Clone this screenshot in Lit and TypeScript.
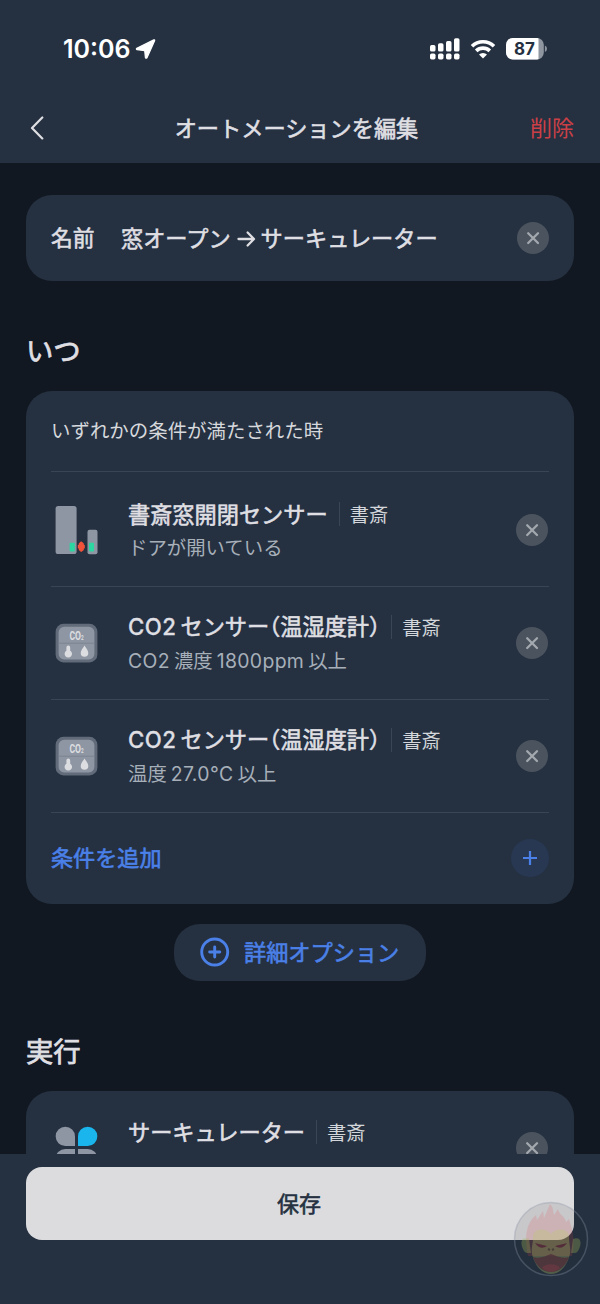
import { LitElement, html, svg, css, nothing, TemplateResult } from "lit";
import { customElement, property } from "lit/decorators.js";

interface Condition {
  icon: "door" | "co2" | "fan";
  title: TemplateResult;
  room: string;
  detail?: TemplateResult;
}

const shared = css`
  * {
    box-sizing: border-box;
  }
  .latin {
    font-family: Inter, "Noto Sans CJK JP", sans-serif;
  }
  .before {
    margin-left: 4px;
  }
  .after {
    margin-right: 4px;
  }
  .half {
    font-feature-settings: "halt";
  }
  .strong {
    font-weight: 400;
    -webkit-text-stroke: 0.6px currentColor;
  }
  .strong .latin {
    font-weight: 500;
    -webkit-text-stroke-width: 0.3px;
  }
`;

const doorIcon = svg`<svg width="44" height="50" viewBox="0 0 44 50">
  <rect x=".6" y=".9" width="21" height="48.2" rx="2.6" fill="#8e96a3"/>
  <rect x="32.5" y="24.8" width="10" height="24.4" rx="2" fill="#8e96a3"/>
  <rect x="14.6" y="37.8" width="5.2" height="8.6" rx=".8" fill="#2bd6a0"/>
  <rect x="34" y="37.8" width="5" height="8.6" rx=".8" fill="#2bd6a0"/>
  <path d="M26.200 37l2 1.600v1.700h1v2.700h-1v1.700l-2 1.600-1.800-1.600V43h-1v-2.700h1v-1.700z" fill="#f1523a" stroke="#f1523a" stroke-width="1.200" stroke-linejoin="round"/>
</svg>`;

const co2Icon = svg`<svg width="44" height="40" viewBox="0 0 44 40">
  <rect x=".6" y=".8" width="41.800" height="38.600" rx="8" fill="#616b79"/>
  <rect x="3.600" y="3.800" width="35.800" height="32.600" rx="5.500" fill="#8e96a3"/>
  <path d="M3.600 20.200h35.800" stroke="#7b8492" stroke-width="1"/>
  <text transform="translate(14.400 16.600) scale(.72 1)" font-family="Roboto, sans-serif" font-weight="700" font-size="12" fill="#dcdde0">CO<tspan font-size="6.500">2</tspan></text>
  <path d="M11.400 24.400a1.900 1.900 0 0 1 3.800 0v3.300a3.700 3.700 0 1 1-3.800 0z" fill="#dcdde0"/>
  <path d="M29.500 22.400c1.600 2.600 3.800 5 3.800 7.500a3.800 3.800 0 0 1-7.600 0c0-2.500 2.200-4.900 3.800-7.500z" fill="#dcdde0"/>
</svg>`;

const fanIcon = svg`<svg width="44" height="44" viewBox="0 0 44 44">
  <path d="M10.300 .7a9.700 9.700 0 0 1 9.700 9.700V20h-9.700a9.650 9.650 0 0 1 0-19.300z" fill="#8e96a3"/>
  <path d="M32.700 .7a9.650 9.650 0 0 1 0 19.300H23v-9.600a9.700 9.700 0 0 1 9.700-9.700z" fill="#19b5ec"/>
  <path d="M10.300 23H20v9.700a9.700 9.700 0 1 1-9.700-9.700z" fill="#8e96a3"/>
  <path d="M23 23h9.700a9.700 9.700 0 1 1-9.700 9.700z" fill="#8e96a3"/>
</svg>`;

@customElement("remove-button")
class RemoveButton extends LitElement {
  static styles = css`
    :host {
      display: block;
      flex: none;
      width: 32px;
      height: 32px;
    }
    svg {
      display: block;
    }
  `;
  render() {
    return html`<svg width="32" height="32" viewBox="0 0 32 32">
      <circle cx="16" cy="16" r="16" fill="#4a535e" />
      <path d="M11.200 11.200l9.800 9.800M21 11.200l-9.800 9.800" stroke="#a3a8ae" stroke-width="2.300" stroke-linecap="round" />
    </svg>`;
  }
}

@customElement("status-bar")
class StatusBar extends LitElement {
  static styles = [
    shared,
    css`
      :host {
        display: flex;
        align-items: center;
        height: 98px;
        padding: 0 53px 0 63px;
        color: #fff;
        font-family: Inter, sans-serif;
      }
      .time {
        font-size: 25px;
        font-weight: 600;
        letter-spacing: 0;
        width: 72px;
        white-space: nowrap;
      }
      .space {
        flex: 1;
      }
      svg {
        display: block;
      }
      .signal {
        margin-right: 10px;
      }
      .wifi {
        margin-right: 10px;
      }
      .battery text {
        font-size: 17px;
        font-weight: 700;
      }
    `,
  ];
  render() {
    const bars = [6.6, 8.400, 10.600, 13.400];
    return html`
      <span class="time">10:06</span>
      <svg width="22" height="22" viewBox="0 0 22 22">
        <path d="M1.800 10.200L18.800 1.900q1.200-.3.800.9L12 19.800q-1.300 1-1.600-.3L9.700 12.600 2 11.700q-1.200-.6-.2-1.500z" fill="#fff" stroke="#fff" stroke-width="1.200" stroke-linejoin="round" />
      </svg>
      <span class="space"></span>
      <svg class="signal" width="30" height="22" viewBox="0 0 30 22">
        ${bars.map(
          (h, i) => svg`
            <rect x=${i * 8} y=${13.600 - h} width="5.500" height=${h} rx="1.700" fill="#fff"/>
            <rect x=${i * 8} y="15.600" width="5.500" height="5.800" rx="1.700" fill="#fff"/>`
        )}
      </svg>
      <svg class="wifi" width="26" height="20" viewBox="0 0 26 20">
        <path d="M2 7.200a15.800 15.800 0 0 1 22 0M6.200 11.900a9.700 9.700 0 0 1 13.600 0" fill="none" stroke="#fff" stroke-width="3.600" />
        <path d="M13 19.500l-4-4a5.800 5.800 0 0 1 8 0z" fill="#fff" />
      </svg>
      <svg class="battery" width="41" height="22" viewBox="0 0 41 22">
        <defs>
          <clipPath id="body"><rect width="37.800" height="21.400" rx="6.800" /></clipPath>
        </defs>
        <g clip-path="url(#body)">
          <rect width="38" height="22" fill="#8f969f" />
          <rect width="32.500" height="22" fill="#fff" />
        </g>
        <path d="M38.900 7.400q2.100 1 2.100 3.300t-2.100 3.300z" fill="#8f969f" />
        <text x="18.500" y="16.800" text-anchor="middle" fill="#253141">87</text>
      </svg>
    `;
  }
}

@customElement("condition-row")
class ConditionRow extends LitElement {
  @property({ attribute: false }) item!: Condition;

  static styles = [
    shared,
    css`
      :host {
        display: flex;
        align-items: center;
        height: 113px;
        padding-right: 1px;
      }
      .icon {
        width: 77px;
        padding-left: 4px;
        flex: none;
        margin-bottom: 2px;
      }
      remove-button {
        margin-bottom: 2px;
      }
      .icon svg {
        display: block;
      }
      .copy {
        flex: 1;
        white-space: nowrap;
      }
      .head {
        display: flex;
        align-items: center;
        height: 34px;
      }
      .title {
        font-size: 22.200px;
        line-height: 32px;
        padding-bottom: 2px;
        color: #dfdfe3;
      }
      .title .latin {
        letter-spacing: 0.5px;
      }
      .room {
        font-size: 19.300px;
        line-height: 34px;
        color: #d3d6da;
        margin-left: 11px;
        display: flex;
        align-items: center;
        gap: 10px;
      }
      .room::before {
        content: "";
        width: 1px;
        height: 24px;
        background: #3a4655;
      }
      .detail {
        font-size: 19.400px;
        line-height: 31px;
        height: 33px;
        color: #a7afb9;
      }
      .detail .latin {
        letter-spacing: 0.35px;
      }
    `,
  ];
  render() {
    const { icon, title, room, detail } = this.item;
    return html`
      <div class="icon">${icon === "door" ? doorIcon : icon === "co2" ? co2Icon : fanIcon}</div>
      <div class="copy">
        <div class="head">
          <span class="title strong">${title}</span>
          <span class="room">${room}</span>
        </div>
        <div class="detail">${detail ?? nothing}</div>
      </div>
      <remove-button></remove-button>
    `;
  }
}

@customElement("app-root")
class AppRoot extends LitElement {
  static styles = [
    shared,
    css`
      :host {
        display: flex;
        flex-direction: column;
        position: relative;
        width: 600px;
        height: 1304px;
        overflow: hidden;
        background: #121822;
        color: #dfdfe3;
        font-family: "Noto Sans CJK JP", sans-serif;
        text-autospace: no-autospace;
      }
      svg {
        display: block;
      }
      .top {
        flex: none;
        height: 163px;
        background: #253141;
      }
      .nav {
        display: grid;
        grid-template-columns: 100px 1fr 100px;
        align-items: center;
        height: 60px;
        padding: 0 26px 0 29px;
      }
      .nav-title {
        font-size: 22.200px;
        text-align: center;
        margin-right: 10px;
        padding-bottom: 3px;
        white-space: nowrap;
      }
      .delete {
        font-size: 22px;
        color: #cb4047;
        text-align: right;
        padding-bottom: 4px;
      }
      .content {
        flex: 1;
        min-height: 0;
        overflow: hidden;
        padding: 32px 26px 0;
      }
      .card {
        background: #253141;
        border-radius: 26px;
        padding: 0 25px;
      }
      .name {
        display: flex;
        align-items: center;
        height: 86px;
        font-size: 22.200px;
        white-space: nowrap;
      }
      .name-label {
        width: 70px;
        font-size: 21.800px;
        padding-bottom: 3px;
      }
      .name-value {
        flex: 1;
        padding-bottom: 3px;
      }
      .arrow {
        display: inline-block;
        margin: 0 5px 0 6px;
        vertical-align: -1px;
      }
      .section {
        margin: 0;
        font-size: 27.300px;
        line-height: 40px;
      }
      .section.strong {
        -webkit-text-stroke-width: 0.8px;
      }
      .when {
        margin: 48px 0 22px;
      }
      .run {
        margin: 49px 0 21px;
      }
      .rule {
        height: 80px;
        font-size: 19.450px;
        line-height: 78px;
        color: #d6d8dc;
      }
      .line {
        height: 1px;
        background: #394554;
      }
      .first {
        padding-top: 2px;
      }
      .row {
        height: 112px;
        display: grid;
        align-items: center;
      }
      .last {
        padding-top: 1px;
      }
      .add {
        display: flex;
        align-items: center;
        justify-content: space-between;
        height: 91px;
        padding-bottom: 2px;
        color: #4a80e8;
        font-size: 22.100px;
      }
      .add span {
        padding-bottom: 3px;
      }
      .options {
        display: flex;
        align-items: center;
        width: 252px;
        height: 57px;
        margin: 20px auto 0;
        padding-left: 26px;
        gap: 14px;
        border-radius: 26px;
        background: #253141;
        color: #4a80e8;
        font-size: 22.200px;
        white-space: nowrap;
      }
      .options svg {
        margin-bottom: 1px;
      }
      .options span {
        padding-bottom: 3px;
      }
      .bottom {
        flex: none;
        height: 150px;
        padding: 13px 26px 0;
        background: #253141;
      }
      .save {
        display: grid;
        place-items: center;
        height: 73px;
        padding: 0 2px 4px 0;
        border-radius: 16px;
        background: #dcdcdf;
        color: #253141;
        font-size: 22px;
      }
      .badge {
        position: absolute;
        left: 513px;
        top: 1201px;
      }
    `,
  ];

  private conditions: Condition[] = [
    {
      icon: "door",
      title: html`書斎窓開閉センサー`,
      room: "書斎",
      detail: html`ドアが開いている`,
    },
    {
      icon: "co2",
      title: html`<span class="latin after">CO2</span>センサー<span class="half">（</span>温湿度計<span class="half">）</span>`,
      room: "書斎",
      detail: html`<span class="latin after">CO2</span>濃度<span class="latin before after">1800ppm</span>以上`,
    },
    {
      icon: "co2",
      title: html`<span class="latin after">CO2</span>センサー<span class="half">（</span>温湿度計<span class="half">）</span>`,
      room: "書斎",
      detail: html`温度<span class="latin before after">27.0°C</span>以上`,
    },
  ];

  private action: Condition = { icon: "fan", title: html`サーキュレーター`, room: "書斎" };

  render() {
    return html`
      <header class="top">
        <status-bar></status-bar>
        <div class="nav">
          <svg width="16" height="24" viewBox="0 0 16 24">
            <path d="M13.300 1.500L3 12l10.300 10.400" fill="none" stroke="#dfdfe3" stroke-width="2.200" stroke-linecap="round" stroke-linejoin="round" />
          </svg>
          <span class="nav-title strong">オートメーションを編集</span>
          <span class="delete">削除</span>
        </div>
      </header>
      <main class="content">
        <div class="card name strong">
          <span class="name-label">名前</span>
          <span class="name-value">窓オープン<svg class="arrow" width="19" height="18" viewBox="0 0 19 18">
              <path d="M1.500 9h15M10.600 2.500L17 9l-6.400 6.500" fill="none" stroke="#dfdfe3" stroke-width="2.300" stroke-linecap="round" stroke-linejoin="round" /></svg>サーキュレーター</span>
          <remove-button></remove-button>
        </div>
        <h2 class="section when strong">いつ</h2>
        <div class="card">
          <div class="rule">いずれかの条件が満たされた時</div>
          <div class="line"></div>
          ${this.conditions.map(
            (c, i) => html`
              <div class=${i === 0 ? "first" : ""}><div class="row"><condition-row .item=${c}></condition-row></div></div>
              <div class="line"></div>
            `
          )}
          <div class="add strong">
            <span>条件を追加</span>
            <svg width="38" height="38" viewBox="0 0 38 38">
              <circle cx="19" cy="19" r="19" fill="#283853" />
              <path d="M19 12v14M12 19h14" stroke="#4a80e8" stroke-width="2.200" />
            </svg>
          </div>
        </div>
        <div class="options strong">
          <svg width="30" height="30" viewBox="0 0 30 30">
            <circle cx="14.700" cy="15" r="13" fill="none" stroke="#4a80e8" stroke-width="2.900" />
            <path d="M14.700 9.900v10.200M9.600 15h10.200" stroke="#4a80e8" stroke-width="2.900" stroke-linecap="round" />
          </svg>
          <span>詳細オプション</span>
        </div>
        <h2 class="section run strong">実行</h2>
        <div class="card last"><condition-row .item=${this.action}></condition-row></div>
      </main>
      <footer class="bottom">
        <div class="save strong">保存</div>
      </footer>
      <svg class="badge" width="76" height="76" viewBox="0 0 76 76">
        <circle cx="38" cy="38" r="36.500" fill="#222" fill-opacity=".1" stroke="#8a93a3" stroke-opacity=".35" stroke-width="1.500" />
        <g opacity=".17">
          <path d="M15 55C10 30 16 20 23 14l1 5 6-9 1 7 6-14c4 4 3 8 4 11l4-6c1 6 7 7 8 13l3-3c3 11 7 20 3 37z" fill="#e0484c" />
        </g>
        <g opacity=".3">
          <path d="M16 38c-8-3-9 4-6 10 2 5 5 4 8 4zM60 38c8-3 9 4 6 10-2 5-5 4-8 4z" fill="#a5b958" />
          <path d="M38 33c-5-7-19-6-18 4 0 6-2 10-1 16 3 12 10 20 19 20s16-8 19-20c1-6-1-10-1-16 1-10-13-11-18-4z" fill="#b9c968" />
          <path d="M22 42l12 3c-4 3-9 2-12-3zM54 42l-12 3c4 3 9 2 12-3z" fill="#7c2230" />
          <path d="M35 48l2 1M41 48l-2 1" stroke="#4c5a2c" stroke-width="2" />
        </g>
        <path d="M20 56c7 2 12-1 18-3 6 2 11 5 18 3-3 9-10 15-18 15s-15-6-18-15z" fill="#4b2335" fill-opacity=".65" />
        <path d="M29 67c3-5 15-5 18 0-5 5-13 5-18 0z" fill="#7c3946" fill-opacity=".5" />
      </svg>
    `;
  }
}
